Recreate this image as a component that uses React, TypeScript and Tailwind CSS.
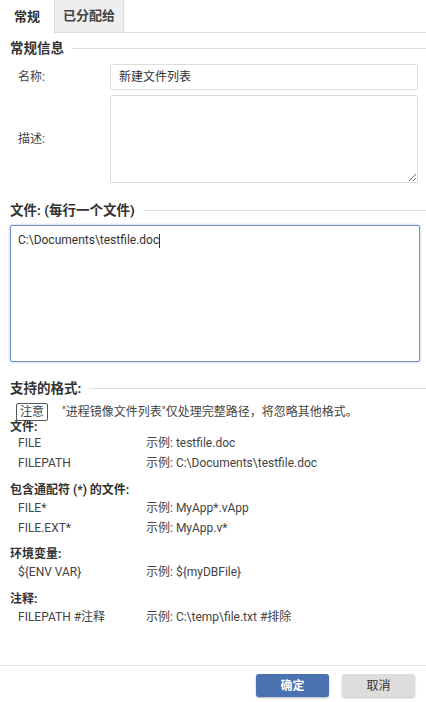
import React from 'react';

const font = { fontFamily: 'Roboto, "Noto Sans CJK SC", sans-serif' };

function Section({ title }: { title: string }) {
  return (
    <div className="flex items-center gap-2 h-5 mr-[-10px]">
      <span className="text-[13.5px] font-bold text-[#333] whitespace-nowrap">{title}</span>
      <div className="flex-1 h-px bg-[#dddddd]" />
    </div>
  );
}

function Row({ name, example }: { name: string; example: string }) {
  return (
    <div className="flex h-5 items-center text-[12px] text-[#444]">
      <span className="w-[136px] pl-[8px]">{name}</span>
      <span>示例: {example}</span>
    </div>
  );
}

function Heading({ text, className = '' }: { text: string; className?: string }) {
  return <div className={`text-[12px] font-bold leading-[16px] h-4 ${className}`}>{text}</div>;
}

export default function App() {
  return (
    <div className="w-[426px] h-[702px] bg-white flex flex-col text-[#333]" style={font}>
      {/* Tabs */}
      <div className="flex h-[33px]">
        <div className="w-[55px] flex items-center justify-center text-[13px] font-bold border-r border-[#dddddd]">
          常规
        </div>
        <div className="w-[69px] flex items-center justify-center text-[13px] font-bold bg-[#eeeeee] border-r border-b border-[#dddddd] text-[#444]">
          已分配给
        </div>
        <div className="flex-1 border-b border-[#dddddd]" />
      </div>

      <div className="flex-1 px-[10px] pt-[5px]">
        <Section title="常规信息" />
        <div className="flex items-center mt-[6px]">
          <span className="w-[100px] pl-[8px] text-[12px] text-[#444]">名称:</span>
          <div className="flex-1 mr-[-2px] h-[26px] border border-[#dddddd] rounded-[2px] flex items-center px-[8px] text-[12px] text-[#333]">
            新建文件列表
          </div>
        </div>
        <div className="flex items-center mt-[5px]">
          <span className="w-[100px] pl-[8px] text-[12px] text-[#444]">描述:</span>
          <textarea
            className="flex-1 mr-[-2px] h-[88px] border border-[#dddddd] rounded-[2px] outline-none"
            defaultValue=""
          />
        </div>

        <div className="mt-[17px]">
          <Section title="文件: (每行一个文件)" />
        </div>
        <div className="mt-[5px] mr-[-4px] h-[137px] border border-[#6d8fc8] rounded-[2px] shadow-[0_0_3px_rgba(80,120,200,0.45)] px-[7px] py-[5px] text-[12px] text-[#333]">
          C:\Documents\testfile.doc<span className="inline-block w-px h-[14px] bg-[#333] align-middle" />
        </div>

        <div className="mt-[16px]">
          <Section title="支持的格式:" />
        </div>
        <div className="flex items-center mt-[5px] pl-[6px] text-[12px] text-[#444]">
          <span className="border border-[#555] rounded-[2px] px-[3px] leading-[16px]">注意</span>
          <span className="ml-[14px]">"进程镜像文件列表"仅处理完整路径，将忽略其他格式。</span>
        </div>
        <div className="text-[12px] font-bold leading-[12px] h-3">文件:</div>
        <Row name="FILE" example="testfile.doc" />
        <Row name="FILEPATH" example="C:\Documents\testfile.doc" />

        <Heading text="包含通配符 (*) 的文件:" className="mt-[9px]" />
        <Row name="FILE*" example="MyApp*.vApp" />
        <Row name="FILE.EXT*" example="MyApp.v*" />

        <Heading text="环境变量:" className="mt-[8px]" />
        <Row name="${ENV VAR}" example="${myDBFile}" />

        <Heading text="注释:" className="mt-[9px]" />
        <Row name="FILEPATH #注释" example="C:\temp\file.txt #排除" />
      </div>

      {/* Footer */}
      <div className="h-[37px] border-t border-[#e5e5e5] flex items-start justify-end gap-[13px] pr-[11px] pt-[8px]">
        <button className="w-[73px] h-[23px] rounded-[3px] bg-[#4a72b0] text-white text-[12px] font-bold shadow-[0_1px_2px_rgba(0,0,0,0.3)]">
          确定
        </button>
        <button className="w-[73px] h-[23px] rounded-[3px] bg-[#dddddd] text-[#333] text-[12px] shadow-[0_1px_2px_rgba(0,0,0,0.25)]">
          取消
        </button>
      </div>
    </div>
  );
}
